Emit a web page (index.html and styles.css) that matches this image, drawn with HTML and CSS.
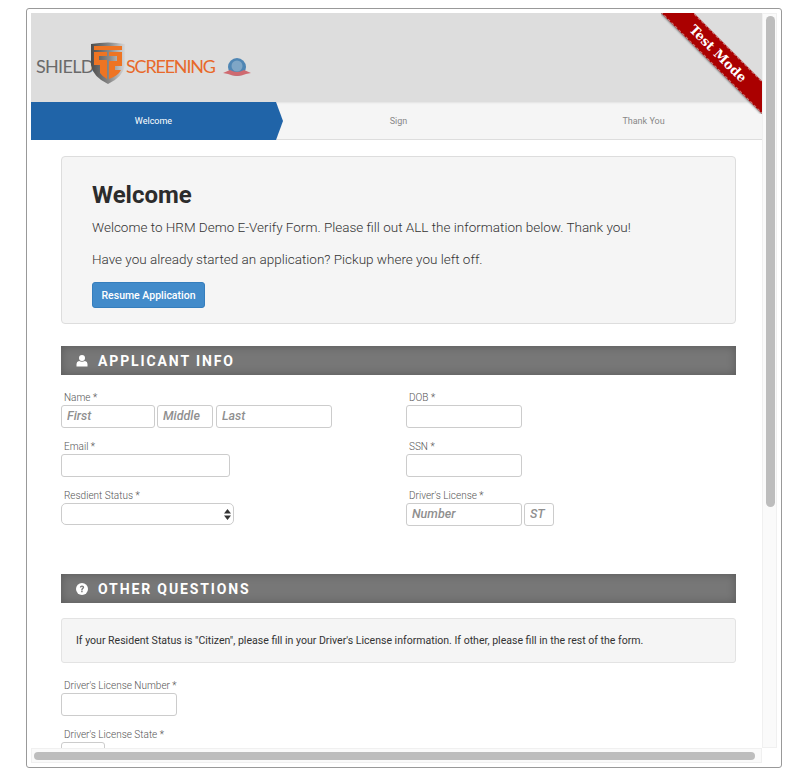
FILE: index.html
```html
<!DOCTYPE html>
<html lang="en">
<head>
  <meta charset="UTF-8">
  <title>E-Verify Form</title>
  <link rel="stylesheet" href="styles.css">
</head>
<body>

<div class="frame">
  <div class="viewport">
    <div class="page">

      <header class="top">
        <div class="logo">
          <span class="logo-grey">SHIELD</span>
          <svg class="shield" width="36" height="43" viewBox="0 0 36 43">
            <defs>
              <linearGradient id="steel" x1="0" y1="0" x2="1" y2="0">
                <stop offset="0" stop-color="#4c4c4c"/>
                <stop offset="0.55" stop-color="#8a8a8a"/>
                <stop offset="1" stop-color="#d8d8d8"/>
              </linearGradient>
            </defs>
            <path d="M1 2 Q18 -1 35 2 L35 23 Q33 35 18 42 Q3 35 1 23 Z" fill="url(#steel)"/>
            <path d="M4 4 H32 V8 H4 Z" fill="#ee7423"/>
            <path d="M4 10 H17 V14 H9 V18 H17 V37 Q12 34 10 31 V23 H4 Z" fill="#ee7423"/>
            <path d="M19 10 H32 V24 H25 V28 H31 Q28 34 19 37 V19 H27 V14 H19 Z" fill="#ee7423"/>
          </svg>
          <span class="logo-orange">SCREENING</span>
          <svg class="badge" width="30" height="20" viewBox="0 0 30 20">
            <circle cx="15" cy="9" r="9" fill="#4f86b4"/>
            <circle cx="15" cy="8" r="5.5" fill="#7ea6c6"/>
            <path d="M1 15 L8 12 Q15 16 22 12 L29 15 L24 16 Q15 20 6 16 Z" fill="#cf6a70"/>
          </svg>
        </div>
      </header>

      <nav class="steps">
        <div class="step step-active">Welcome</div>
        <div class="step">Sign</div>
        <div class="step">Thank You</div>
      </nav>

      <main class="content">
        <section class="well">
          <h2>Welcome</h2>
          <p>Welcome to HRM Demo E-Verify Form. Please fill out ALL the information below. Thank you!</p>
          <p>Have you already started an application? Pickup where you left off.</p>
          <button class="btn" type="button">Resume Application</button>
        </section>

        <h3 class="section-title">
          <svg width="12" height="12" viewBox="0 0 12 12"><circle cx="6" cy="3" r="3" fill="#fff"/><path d="M0.5 11.5 V9 Q0.5 6.5 3 6 Q6 7.5 9 6 Q11.5 6.5 11.5 9 V11.5 Z" fill="#fff"/></svg>
          <span>APPLICANT INFO</span>
        </h3>

        <div class="columns">
          <div class="col">
            <div class="field">
              <label>Name *</label>
              <div class="inputs">
                <input class="w94" placeholder="First">
                <input class="w56" placeholder="Middle">
                <input class="w116" placeholder="Last">
              </div>
            </div>
            <div class="field">
              <label>Email *</label>
              <input class="w169">
            </div>
            <div class="field">
              <label>Resdient Status *</label>
              <div class="select">
                <select><option></option></select>
                <svg width="7" height="11" viewBox="0 0 7 11"><path d="M3.5 0 L7 4.5 H0 Z M3.5 11 L0 6.5 H7 Z" fill="#333"/></svg>
              </div>
            </div>
          </div>
          <div class="col">
            <div class="field">
              <label>DOB *</label>
              <input class="w116">
            </div>
            <div class="field">
              <label>SSN *</label>
              <input class="w116">
            </div>
            <div class="field">
              <label>Driver's License *</label>
              <div class="inputs">
                <input class="w116" placeholder="Number">
                <input class="w30" placeholder="ST">
              </div>
            </div>
          </div>
        </div>

        <h3 class="section-title section-two">
          <svg width="12" height="12" viewBox="0 0 12 12"><circle cx="6" cy="6" r="6" fill="#fff"/><path d="M3.8 4.6 Q3.9 2.5 6 2.5 Q8.2 2.5 8.2 4.3 Q8.2 5.4 7 6 Q6.6 6.3 6.6 7.2 H5.2 Q5.2 5.7 6 5.2 Q6.7 4.8 6.7 4.3 Q6.7 3.8 6 3.8 Q5.3 3.8 5.2 4.6 Z M5.2 7.8 H6.6 V9.3 H5.2 Z" fill="#777"/></svg>
          <span>OTHER QUESTIONS</span>
        </h3>

        <div class="note">If your Resident Status is "Citizen", please fill in your Driver's License information. If other, please fill in the rest of the form.</div>

        <div class="field">
          <label>Driver's License Number *</label>
          <input class="w116">
        </div>
        <div class="field">
          <label>Driver's License State *</label>
          <input class="w44">
        </div>
      </main>
    </div>

    <div class="ribbon-box">
      <div class="ribbon">Test Mode</div>
    </div>
  </div>

  <div class="bar bar-v"><div class="thumb thumb-v"></div></div>
  <div class="bar bar-h"><div class="thumb thumb-h"></div></div>
</div>

</body>
</html>
```

FILE: styles.css
```css
* {
  box-sizing: border-box;
}
body {
  margin: 8px 16px 0 26px;
  font-family: Roboto, Arial, sans-serif;
  color: #333;
  background: #fff;
}
.frame {
  display: grid;
  grid-template-columns: 731px 15px;
  grid-template-rows: 735px 15px;
  height: 760px;
  padding: 4px;
  background: #fff;
  border: 1px solid #999;
  border-radius: 3px;
}
.viewport {
  position: relative;
  overflow: hidden;
}
.page {
  width: 735px;
}

/* fake scrollbars, the real ones don't show in the shot */
.bar {
  background: #fafafa;
  border: 1px solid #f0f0f0;
}
.thumb {
  background: #bdbdbd;
  border-radius: 5px;
}
.bar-v {
  padding: 2px 2px 0 3px;
}
.thumb-v {
  width: 9px;
  height: 491px;
}
.bar-h {
  grid-column: 1;
  padding: 3px 0 0 2px;
}
.thumb-h {
  width: 721px;
  height: 8px;
}

/* header */
.top {
  display: flex;
  align-items: flex-start;
  height: 89px;
  padding: 29px 0 0 5px;
  background: #ddd;
}
.logo {
  display: flex;
  align-items: center;
  font-family: Lato, Arial, sans-serif;
  font-size: 18px;
}
.logo-grey {
  width: 54px;
  padding-top: 5px;
  color: #6a6a6a;
  white-space: nowrap;
  letter-spacing: -0.7px;
}
.logo-orange {
  width: 96px;
  padding-top: 5px;
  color: #e8692a;
  white-space: nowrap;
  letter-spacing: -1.2px;
}
.badge {
  margin-top: 8px;
}

/* steps */
.steps {
  display: flex;
  height: 38px;
  background: #f5f5f5;
  border-bottom: 1px solid #ddd;
  box-shadow: inset 0 2px 2px -1px rgba(0,0,0,0.08);
}
.step {
  width: 245px;
  font-size: 9px;
  line-height: 38px;
  text-align: center;
  color: #888;
}
.step-active {
  position: relative;
  height: 38px;
  color: #fff;
  background: #2064a8;
}
.step-active::after {
  content: "";
  position: absolute;
  top: 0;
  left: 100%;
  border-left: 7px solid #2064a8;
  border-top: 19px solid transparent;
  border-bottom: 19px solid transparent;
}

/* content */
.content {
  width: 675px;
  margin-left: 30px;
  padding-top: 16px;
}
.well {
  height: 168px;
  padding: 24px 30px 0;
  background: #f5f5f5;
  border: 1px solid #ddd;
  border-radius: 4px;
}
.well h2 {
  margin: 0 0 8px;
  font-size: 24px;
  line-height: 28px;
  font-weight: 700;
  color: #2c2c2c;
}
.well p {
  margin: 0 0 12px;
  font-size: 13.5px;
  line-height: 20px;
  font-weight: 300;
}
.btn {
  display: block;
  width: 113px;
  height: 26px;
  margin-top: 13px;
  padding: 0;
  font-family: inherit;
  font-size: 10.5px;
  font-weight: 500;
  color: #fff;
  background: #428bca;
  border: 1px solid #357ebd;
  border-radius: 3px;
}
.section-title {
  display: flex;
  align-items: center;
  gap: 10px;
  height: 29px;
  margin: 22px 0 16px;
  padding: 1px 0 0 15px;
  font-size: 14px;
  font-weight: 700;
  letter-spacing: 1.88px;
  color: #fff;
  background: #777;
  box-shadow: inset 0 0 10px rgba(0,0,0,0.25);
}
.section-two {
  margin: 0 0 15px;
}
.columns {
  display: flex;
  height: 183px;
}
.col {
  flex: none;
  width: 345px;
}
.field {
  height: 49px;
}
.field label {
  display: block;
  height: 14px;
  padding: 1px 0 0 3px;
  font-size: 10px;
  line-height: 12px;
  font-weight: 300;
  color: #555;
}
.inputs {
  display: flex;
  gap: 2px;
}
input,
select {
  display: block;
  height: 23px;
  padding: 0 4px 2px 5px;
  font-family: inherit;
  font-size: 12.5px;
  background: #fff;
  border: 1px solid #ccc;
  border-radius: 3px;
}
input::placeholder {
  font-style: italic;
  font-weight: 500;
  color: #8f8f8f;
}
.w30 { width: 30px; }
.w44 { width: 44px; }
.w56 { width: 56px; margin-right: 1px; }
.w94 { width: 94px; }
.w116 { width: 116px; }
.w169 { width: 169px; }
.select {
  position: relative;
  width: 173px;
}
.select select {
  width: 100%;
  height: 22px;
  appearance: none;
  border-radius: 5px;
}
.select svg {
  position: absolute;
  top: 6px;
  right: 3px;
}
.note {
  height: 45px;
  margin-bottom: 16px;
  padding-left: 14px;
  font-size: 10.55px;
  line-height: 43px;
  background: #f5f5f5;
  border: 1px solid #e3e3e3;
  border-radius: 3px;
}

/* corner ribbon */
.ribbon-box {
  position: absolute;
  top: 0;
  left: 630px;
  width: 101px;
  height: 101px;
  overflow: hidden;
}
.ribbon {
  position: absolute;
  top: 29px;
  left: -18px;
  width: 150px;
  height: 23px;
  font-family: "DejaVu Serif", serif;
  font-size: 13px;
  font-weight: 700;
  line-height: 21px;
  text-align: center;
  color: #fff;
  background: #a00;
  border-top: 1px dashed #c77;
  border-bottom: 1px dashed #c77;
  box-shadow: 0 1px 2px rgba(0,0,0,0.4);
  transform: rotate(45deg);
}
```
